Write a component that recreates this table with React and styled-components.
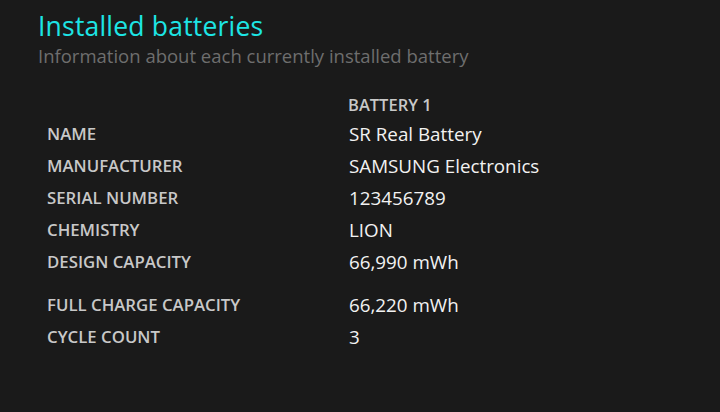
import styled, { createGlobalStyle } from 'styled-components';

const GlobalStyle = createGlobalStyle`
  html, body {
    margin: 0;
    padding: 0;
    background: #1a1a1a;
  }
  body {
    font-family: "Open Sans", "Noto Sans", sans-serif;
  }
`;

const Page = styled.main`
  width: 720px;
  height: 412px;
  box-sizing: border-box;
  padding: 9px 0 0 38px;
  background: #1a1a1a;
  overflow: hidden;
`;

const Title = styled.h1`
  margin: 0;
  font-size: 26.5px;
  font-weight: 400;
  line-height: 34px;
  color: #1de5e5;
  letter-spacing: 0.2px;
`;

const Subtitle = styled.p`
  margin: 0;
  font-size: 18.5px;
  font-weight: 400;
  line-height: 26px;
  color: #6e6e6e;
`;

const Table = styled.div`
  display: grid;
  grid-template-columns: 302px auto;
  margin: 22px 0 0 9px;
`;

const Row = styled.div`
  display: contents;
`;

const Label = styled.div`
  font-size: 16.8px;
  font-weight: 600;
  line-height: 32px;
  color: #c8c8c8;
  padding-top: ${(p) => (p.$gap ? '11px' : '0')};
`;

const Value = styled.div`
  font-size: 18.8px;
  font-weight: 400;
  line-height: 32px;
  color: #f2f2f2;
  padding-top: ${(p) => (p.$gap ? '11px' : '0')};
`;

const ColHead = styled.div`
  grid-column: 2;
  font-size: 16.5px;
  font-weight: 600;
  line-height: 27px;
  color: #c8c8c8;
  margin-left: -1px;
`;

const rows = [
  ['NAME', 'SR Real Battery'],
  ['MANUFACTURER', 'SAMSUNG Electronics'],
  ['SERIAL NUMBER', '123456789'],
  ['CHEMISTRY', 'LION'],
  ['DESIGN CAPACITY', '66,990 mWh'],
  ['FULL CHARGE CAPACITY', '66,220 mWh', true],
  ['CYCLE COUNT', '3'],
];

export default function App() {
  return (
    <Page>
      <GlobalStyle />
      <Title>Installed batteries</Title>
      <Subtitle>Information about each currently installed battery</Subtitle>
      <Table>
        <ColHead>BATTERY 1</ColHead>
        {rows.map(([label, value, gap]) => (
          <Row key={label}>
            <Label $gap={gap}>{label}</Label>
            <Value $gap={gap}>{value}</Value>
          </Row>
        ))}
      </Table>
    </Page>
  );
}
